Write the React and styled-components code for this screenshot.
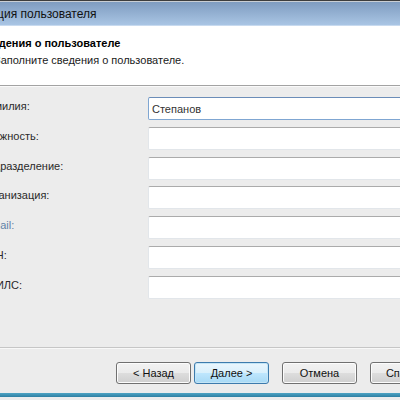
import styled, { createGlobalStyle } from "styled-components";

const GlobalStyle = createGlobalStyle`
    html, body {
        margin: 0;
        padding: 0;
        background: #ececec;
    }
    body {
        font-family: "Liberation Sans", Arial, sans-serif;
        font-size: 11px;
        color: #1e1e1e;
    }
`;

const Window = styled.div`
    width: 400px;
    height: 400px;
    display: flex;
    flex-direction: column;
    overflow: hidden;
    background: #ececec;
`;

const TopEdge = styled.div`
    height: 1px;
    background: #3d3d3d;
    border-bottom: 1px solid #c9ced4;
`;

const TitleBar = styled.div`
    height: 23px;
    display: flex;
    align-items: center;
    background: linear-gradient(#7f9cc0, #a9c5e4);
    border-bottom: 1px solid #c8daef;
    overflow: hidden;
`;

const Caption = styled.span`
    margin-left: -53px;
    white-space: nowrap;
    color: #111;
    font-size: 12px;
`;

const Header = styled.div`
    height: 60px;
    background: #fff;
    border-bottom: 1px solid #a3a3a3;
    box-shadow: 0 1px 0 #fafafa;
    padding: 10px 0 0 0;
    box-sizing: border-box;
`;

const HeaderTitle = styled.div`
    margin-left: -22px;
    font-weight: bold;
    font-size: 11px;
    line-height: 14px;
    color: #000;
    white-space: nowrap;
`;

const HeaderText = styled.div`
    margin-left: -6px;
    margin-top: 3px;
    font-size: 11px;
    line-height: 14px;
    color: #1a1a1a;
    white-space: nowrap;
`;

const Body = styled.div`
    height: 261px;
    padding-top: 11px;
    box-sizing: border-box;
`;

const Form = styled.div`
    display: grid;
    grid-template-columns: 168px 300px;
    grid-auto-rows: 23px;
    row-gap: 6.8px;
    margin-left: -20px;
`;

const Label = styled.label`
    padding-top: 3px;
    white-space: nowrap;
    color: ${p => (p.$link ? "#5f82a8" : "#2a2a2a")};
`;

const Field = styled.div`
    box-sizing: border-box;
    height: 23px;
    background: #fff;
    border: 1px solid ${p => (p.$focus ? "#7fa6d2" : "#e2e6ea")};
    border-top-color: ${p => (p.$focus ? "#6b8db8" : "#ababab")};
    border-radius: 2px;
    padding: 0 0 0 3px;
    display: flex;
    align-items: center;
    color: #333;
    white-space: nowrap;
`;

const Footer = styled.div`
    height: 46px;
    border-top: 1px solid #c6c6c6;
    box-shadow: inset 0 1px 0 #f8f8f8;
    box-sizing: border-box;
    display: flex;
    align-items: flex-start;
    padding: 14px 0 0 116px;
    gap: 13px;
`;

const ButtonPair = styled.div`
    display: flex;
    gap: 3px;
`;

const Button = styled.button`
    flex: none;
    width: 75px;
    height: 22px;
    box-sizing: border-box;
    border-radius: 3px;
    border: 1px solid ${p => (p.$primary ? "#3d7bad" : "#707070")};
    background: ${p =>
        p.$primary
            ? "linear-gradient(#eaf6fd 0%, #d9f0fc 50%, #bee6fd 51%, #a7d9f5 100%)"
            : "linear-gradient(#f2f2f2 0%, #ebebeb 50%, #dddddd 51%, #cfcfcf 100%)"};
    box-shadow: inset 0 0 0 1px ${p => (p.$primary ? "#c4e5f6" : "#fcfcfc")};
    font-family: "Liberation Sans", Arial, sans-serif;
    font-size: 11px;
    color: #111;
    padding: 0;
    white-space: nowrap;
    overflow: hidden;
`;

const BottomEdge = styled.div`
    height: 4px;
    background: linear-gradient(#4ea4c4, #2e7fa2);
`;

const fields = [
    { label: "Фамилия:", value: "Степанов", focus: true },
    { label: "Должность:" },
    { label: "Подразделение:" },
    { label: "Организация:" },
    { label: "E-mail:", link: true },
    { label: "ИНН:" },
    { label: "СНИЛС:" },
];

const App = () => {
    return (
        <>
            <GlobalStyle />
            <Window>
                <TopEdge />
                <TitleBar>
                    <Caption>Регистрация пользователя</Caption>
                </TitleBar>
                <Header>
                    <HeaderTitle>Сведения о пользователе</HeaderTitle>
                    <HeaderText>Заполните сведения о пользователе.</HeaderText>
                </Header>
                <Body>
                    <Form>
                        {fields.map(f => (
                            <>
                                <Label key={f.label + "l"} $link={f.link}>{f.label}</Label>
                                <Field key={f.label + "f"} $focus={f.focus}>{f.value}</Field>
                            </>
                        ))}
                    </Form>
                </Body>
                <Footer>
                    <ButtonPair>
                        <Button>&lt; Назад</Button>
                        <Button $primary>Далее &gt;</Button>
                    </ButtonPair>
                    <Button>Отмена</Button>
                    <Button>Справка</Button>
                </Footer>
                <BottomEdge />
            </Window>
        </>
    );
};

export default App;
